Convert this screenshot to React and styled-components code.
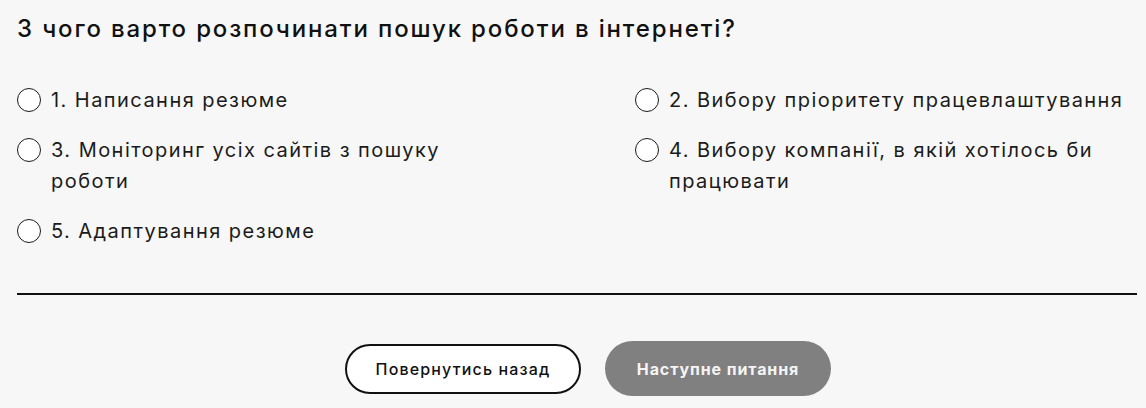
import React, { useState } from 'react'
import styled, { createGlobalStyle } from 'styled-components'

const GlobalStyle = createGlobalStyle`
  html, body {
    margin: 0;
    padding: 0;
    background: #f7f7f7;
  }
  * {
    box-sizing: border-box;
  }
`

const options = [
  { id: 1, text: '1. Написання резюме' },
  { id: 2, text: '2. Вибору пріоритету працевлаштування' },
  { id: 3, text: '3. Моніторинг усіх сайтів з пошуку роботи' },
  { id: 4, text: '4. Вибору компанії, в якій хотілось би працювати' },
  { id: 5, text: '5. Адаптування резюме' },
]

const App = () => {
  const [picked, setPicked] = useState(null)

  return (
    <>
      <GlobalStyle />
      <Quiz>
        <Question>З чого варто розпочинати пошук роботи в інтернеті?</Question>
        <Answers>
          {options.map((o) => (
            <Answer key={o.id} onClick={() => setPicked(o.id)}>
              <Radio $checked={picked === o.id} />
              <AnswerText>{o.text}</AnswerText>
            </Answer>
          ))}
        </Answers>
        <Divider />
        <Actions>
          <BackButton type="button">Повернутись назад</BackButton>
          <NextButton type="button" disabled={picked === null}>
            Наступне питання
          </NextButton>
        </Actions>
      </Quiz>
    </>
  )
}

const Quiz = styled.section`
  width: 1146px;
  height: 408px;
  padding: 14px 9px 0 17px;
  color: #1b1b1b;
  font-family: Inter, 'Noto Sans', sans-serif;
`

const Question = styled.h2`
  margin: 0;
  font-size: 24px;
  font-weight: 500;
  line-height: 30px;
  letter-spacing: 1.85px;
  color: #111;
`

const Answers = styled.div`
  display: grid;
  grid-template-columns: 618px 1fr;
  row-gap: 19px;
  margin-top: 41px;
`

const Answer = styled.label`
  display: flex;
  align-items: flex-start;
  gap: 10px;
  max-width: 496px;
  cursor: pointer;
`

const Radio = styled.span`
  flex: none;
  width: 24px;
  height: 24px;
  margin-top: 3px;
  border: 1.5px solid #1b1b1b;
  border-radius: 50%;
  background: ${(p) => (p.$checked ? '#1b1b1b' : '#fff')};
  box-shadow: ${(p) => (p.$checked ? 'inset 0 0 0 4px #fff' : 'none')};
`

const AnswerText = styled.span`
  font-size: 20px;
  line-height: 31px;
  letter-spacing: 1.45px;
`

const Divider = styled.hr`
  margin: 46px 0 0;
  height: 2px;
  border: 0;
  background: #111;
`

const Actions = styled.div`
  display: flex;
  justify-content: center;
  align-items: center;
  gap: 24px;
  margin-top: 46px;
  padding-left: 22px;
`

const Pill = styled.button`
  font-family: Inter, 'Noto Sans', sans-serif;
  font-size: 16px;
  border-radius: 28px;
  cursor: pointer;
`

const BackButton = styled(Pill)`
  width: 236px;
  height: 50px;
  border: 2px solid #111;
  background: #fff;
  color: #111;
  font-weight: 500;
  letter-spacing: 1.15px;
`

const NextButton = styled(Pill)`
  width: 226px;
  height: 55px;
  border: 0;
  background: #808080;
  color: #f4f4f4;
  font-weight: 700;
  letter-spacing: 0.9px;
  &:disabled {
    cursor: default;
  }
`

export default App
